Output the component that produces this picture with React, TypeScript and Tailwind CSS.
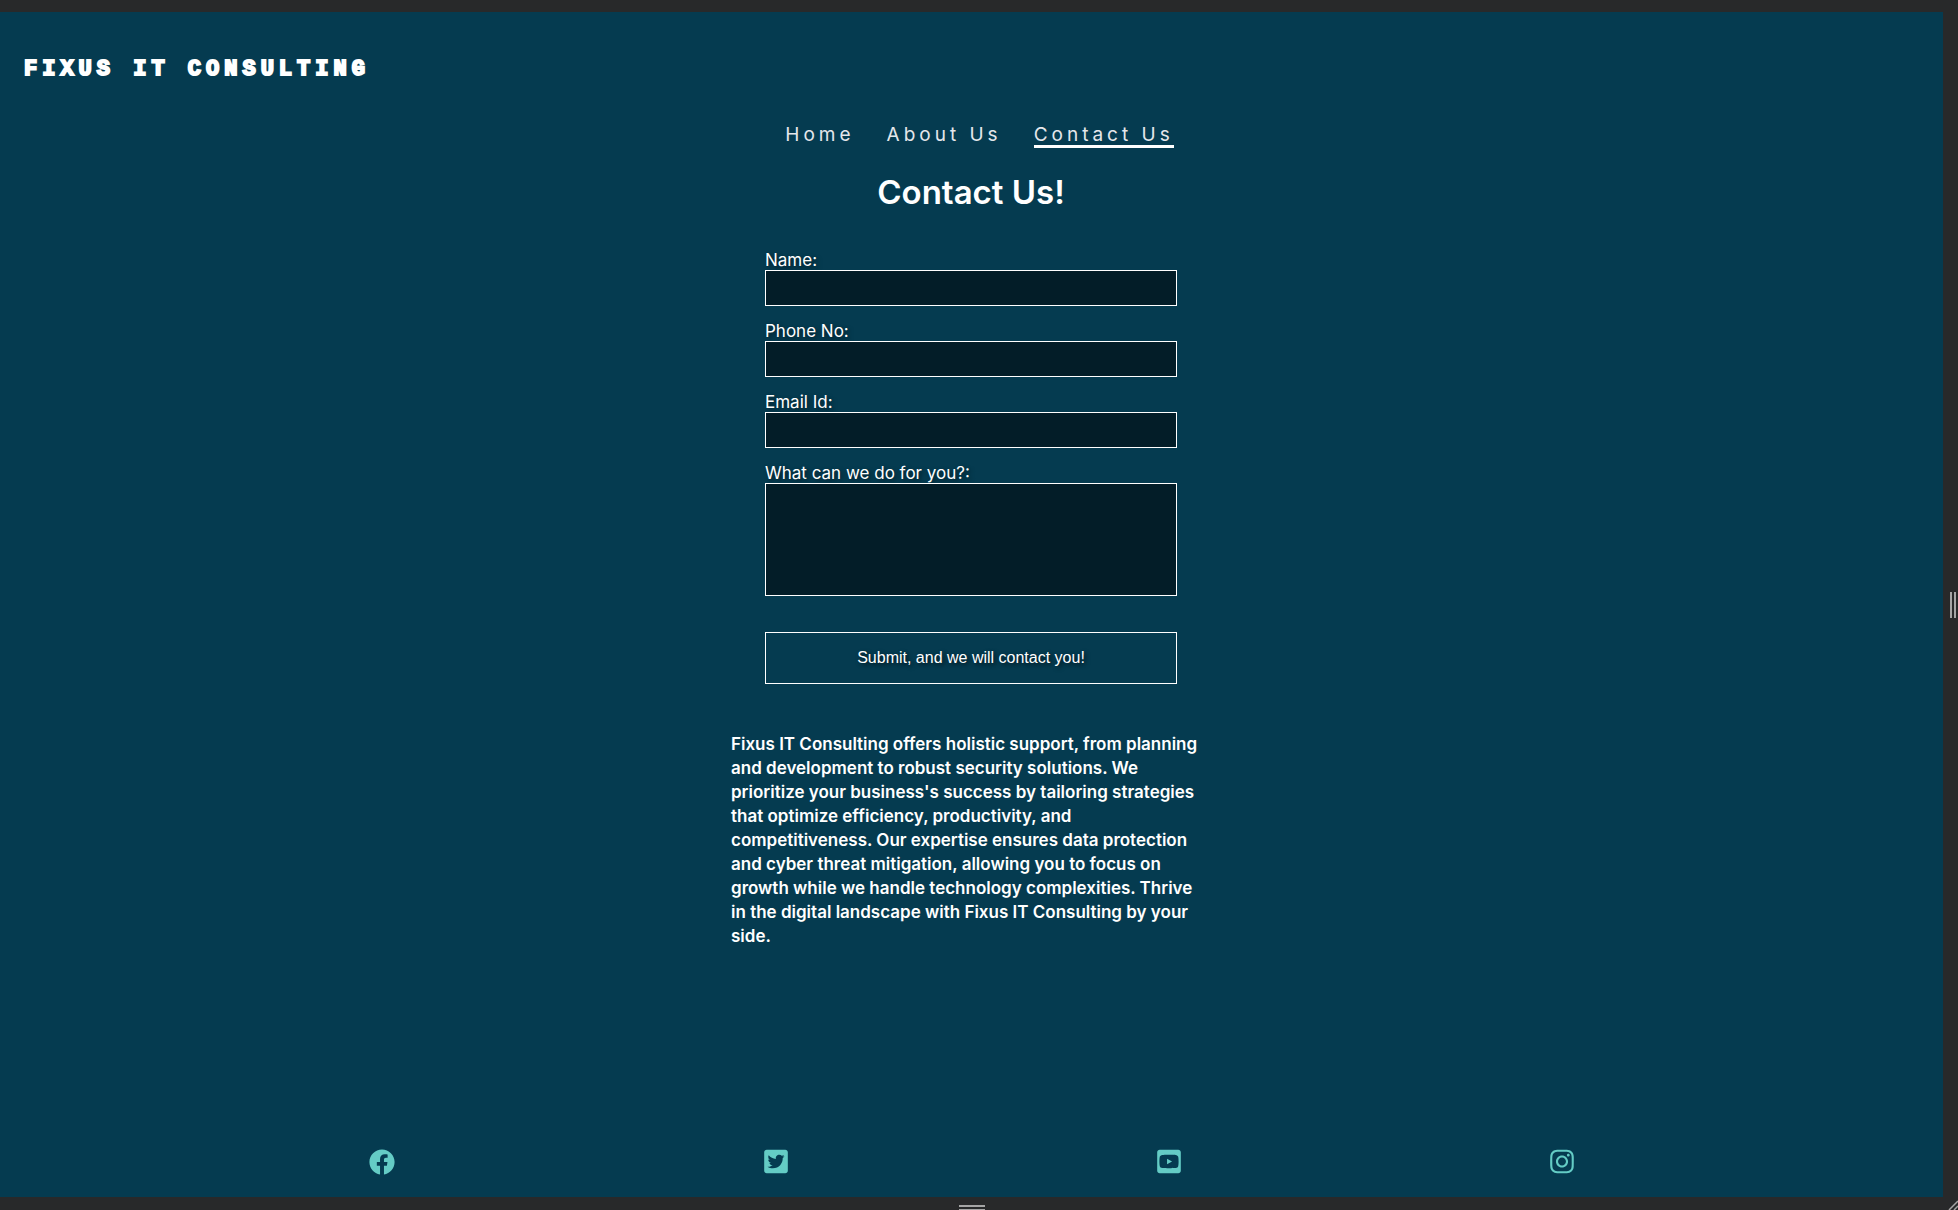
import type { ReactNode } from "react";
import { FaFacebook, FaInstagram, FaTwitterSquare, FaYoutubeSquare } from "react-icons/fa";

const navLinks = [
  { label: "Home", active: false },
  { label: "About Us", active: false },
  { label: "Contact Us", active: true },
];

const textFields = [
  { id: "name", label: "Name:", type: "text" },
  { id: "phone", label: "Phone No:", type: "tel" },
  { id: "email", label: "Email Id:", type: "email" },
];

const socials = [
  { name: "Facebook", Icon: FaFacebook, size: "h-[26px] w-[26px]" },
  { name: "Twitter", Icon: FaTwitterSquare, size: "h-[27px] w-6" },
  { name: "YouTube", Icon: FaYoutubeSquare, size: "h-[27px] w-6" },
  { name: "Instagram", Icon: FaInstagram, size: "h-[27px] w-6" },
];

function Field({ id, label, children }: { id: string; label: string; children: ReactNode }) {
  return (
    <div className="flex flex-col">
      <label htmlFor={id} className="text-[17px] leading-[19px] [text-shadow:2px_2px_4px_rgba(0,0,0,0.5)]">
        {label}
      </label>
      {children}
    </div>
  );
}

function Header() {
  return (
    <header>
      <a
        href="#"
        className="mt-[42px] ml-6 block w-fit font-['Liberation_Mono',monospace] text-[22px] leading-8 font-bold tracking-[5px] [-webkit-text-stroke:2px_white]"
      >
        FIXUS IT CONSULTING
      </a>
      <nav className="mt-10 flex justify-center gap-8 pl-4 text-[19px] font-normal leading-[18px] tracking-[4px] text-gray-200">
        {navLinks.map(({ label, active }) => (
          <a
            key={label}
            href="#"
            aria-current={active ? "page" : undefined}
            className={active ? "border-b-3 border-white pb-px" : "border-b-3 border-transparent pb-px"}
          >
            {label}
          </a>
        ))}
      </nav>
    </header>
  );
}

function ContactForm() {
  return (
    <form className="mt-[39px] flex w-full max-w-[412px] flex-col gap-4">
      {textFields.map(({ id, label, type }) => (
        <Field key={id} id={id} label={label}>
          <input id={id} type={type} className="h-9 border border-white bg-[#031d28] px-2" />
        </Field>
      ))}
      <Field id="message" label="What can we do for you?:">
        <textarea id="message" className="h-[113px] resize-none border border-white bg-[#031d28] p-2" />
      </Field>
      <button
        type="submit"
        className="mt-5 h-[52px] border border-white font-['Liberation_Sans',sans-serif] text-base [text-shadow:2px_2px_4px_rgba(0,0,0,0.7)]"
      >
        Submit, and we will contact you!
      </button>
    </form>
  );
}

export default function App() {
  return (
    <div className="flex min-h-screen flex-col bg-[#28292a] pt-3 font-['Inter',sans-serif] text-white">
      <div className="flex flex-1">
        <div className="flex flex-1 flex-col bg-[#053b50]">
          <Header />
          <main className="flex flex-1 flex-col items-center pr-px">
            <h1 className="mt-6 text-[33px] leading-10 font-semibold">Contact Us!</h1>
            <ContactForm />
            <p className="mt-12 w-full max-w-[480px] text-[17px] leading-6 font-semibold">
              Fixus IT Consulting offers holistic support, from planning and development to robust security
              solutions. We prioritize your business's success by tailoring strategies that optimize efficiency,
              productivity, and competitiveness. Our expertise ensures data protection and cyber threat mitigation,
              allowing you to focus on growth while we handle technology complexities. Thrive in the digital
              landscape with Fixus IT Consulting by your side.
            </p>
          </main>
          <footer className="flex items-center justify-evenly pb-[22px] text-[#64ccc5]">
            {socials.map(({ name, Icon, size }) => (
              <a key={name} href="#" aria-label={name}>
                <Icon className={size} />
              </a>
            ))}
          </footer>
        </div>
        <div className="flex w-[15px] items-center justify-end gap-0.5 pr-0.5">
          <span className="h-[26px] w-0.5 bg-[#a5a5a5]" />
          <span className="h-[26px] w-0.5 bg-[#a5a5a5]" />
        </div>
      </div>
      <div className="flex h-[13px] items-end">
        <div className="flex flex-1 flex-col items-center gap-0.5">
          <span className="h-0.5 w-[26px] bg-[#a5a5a5]" />
          <span className="h-px w-[26px] bg-[#a5a5a5]" />
        </div>
        <div className="flex w-[15px] justify-end">
          <svg width="10" height="10" viewBox="0 0 10 10" stroke="#a5a5a5" strokeWidth="1.5" aria-hidden="true">
            <path d="M1 10 10 1M6 10l4-4" />
          </svg>
        </div>
      </div>
    </div>
  );
}
